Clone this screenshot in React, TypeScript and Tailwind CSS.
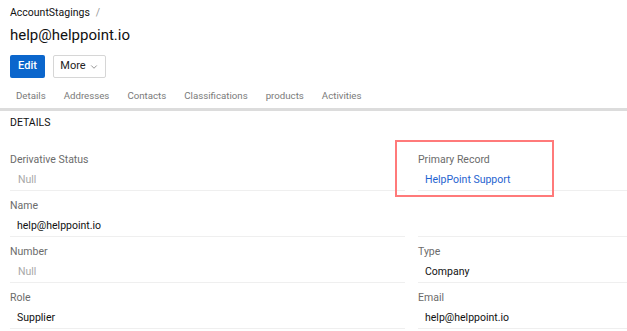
import { ChevronDown } from "lucide-react";

type Field = {
  label: string;
  value?: string;
  kind?: "null" | "link" | "text";
};

const leftFields: Field[] = [
  { label: "Derivative Status", value: "Null", kind: "null" },
  { label: "Name", value: "help@helppoint.io" },
  { label: "Number", value: "Null", kind: "null" },
  { label: "Role", value: "Supplier" },
];

const rightFields: (Field | null)[] = [
  { label: "Primary Record", value: "HelpPoint Support", kind: "link" },
  null,
  { label: "Type", value: "Company" },
  { label: "Email", value: "help@helppoint.io" },
];

const tabs = ["Details", "Addresses", "Contacts", "Classifications", "products", "Activities"];

function FieldCell({ field }: { field: Field | null }) {
  return (
    <div className="h-[46px] border-b border-[#efefef] pt-[8px]">
      {field && (
        <>
          <div className="text-[10.5px] leading-[14px] text-[#6b6b6b]">{field.label}</div>
          <div
            className={
              field.kind === "null"
                ? "mt-[6px] pl-[8px] text-[10.5px] leading-[14px] text-[#a8a8a8]"
                : field.kind === "link"
                  ? "mt-[6px] pl-[7px] text-[10.5px] leading-[14px] text-[#1f63d0]"
                  : "mt-[6px] pl-[7px] text-[10.5px] leading-[14px] text-[#111]"
            }
          >
            {field.value}
          </div>
        </>
      )}
    </div>
  );
}

export default function App() {
  return (
    <div className="relative h-[331px] w-[627px] overflow-hidden bg-white font-['Roboto',sans-serif]">
      <div className="px-[10px] pt-[6px]">
        <div className="flex items-center gap-[6px] text-[10.5px] leading-[14px] text-[#111]">
          <span>AccountStagings</span>
          <span className="text-[#999]">/</span>
        </div>
        <h1 className="mt-[4px] text-[15px] leading-[22px] text-[#111]">help@helppoint.io</h1>
        <div className="mt-[9px] flex gap-[8px]">
          <button className="h-[23px] w-[35px] rounded-[2px] bg-[#0b66cc] text-[11px] font-medium text-white">
            Edit
          </button>
          <button className="flex h-[23px] w-[53px] items-center justify-center gap-[3px] rounded-[2px] border border-[#d6d6d6] text-[11px] text-[#222]">
            More
            <ChevronDown size={10} strokeWidth={1.5} className="text-[#555]" />
          </button>
        </div>
      </div>
      <div className="mt-[10px] flex h-[23px] items-center gap-[18px] border-b-[3px] border-[#dcdcdc] pb-[4px] pl-[16px] text-[9.7px] text-[#7a7a7a]">
        {tabs.map((tab) => (
          <span key={tab}>{tab}</span>
        ))}
      </div>
      <div className="px-[10px] pt-[5px] text-[10.5px] leading-[14px] text-[#111]">DETAILS</div>
      <div className="mt-[15px] grid grid-cols-[395px_1fr] gap-x-[13px] pl-[10px]">
        <div>
          {leftFields.map((f) => (
            <FieldCell key={f.label} field={f} />
          ))}
        </div>
        <div>
          {rightFields.map((f, i) => (
            <FieldCell key={i} field={f} />
          ))}
        </div>
      </div>
      <div className="absolute left-[395px] top-[140px] h-[57px] w-[159px] border-2 border-[#ff7a7a]" />
    </div>
  );
}
